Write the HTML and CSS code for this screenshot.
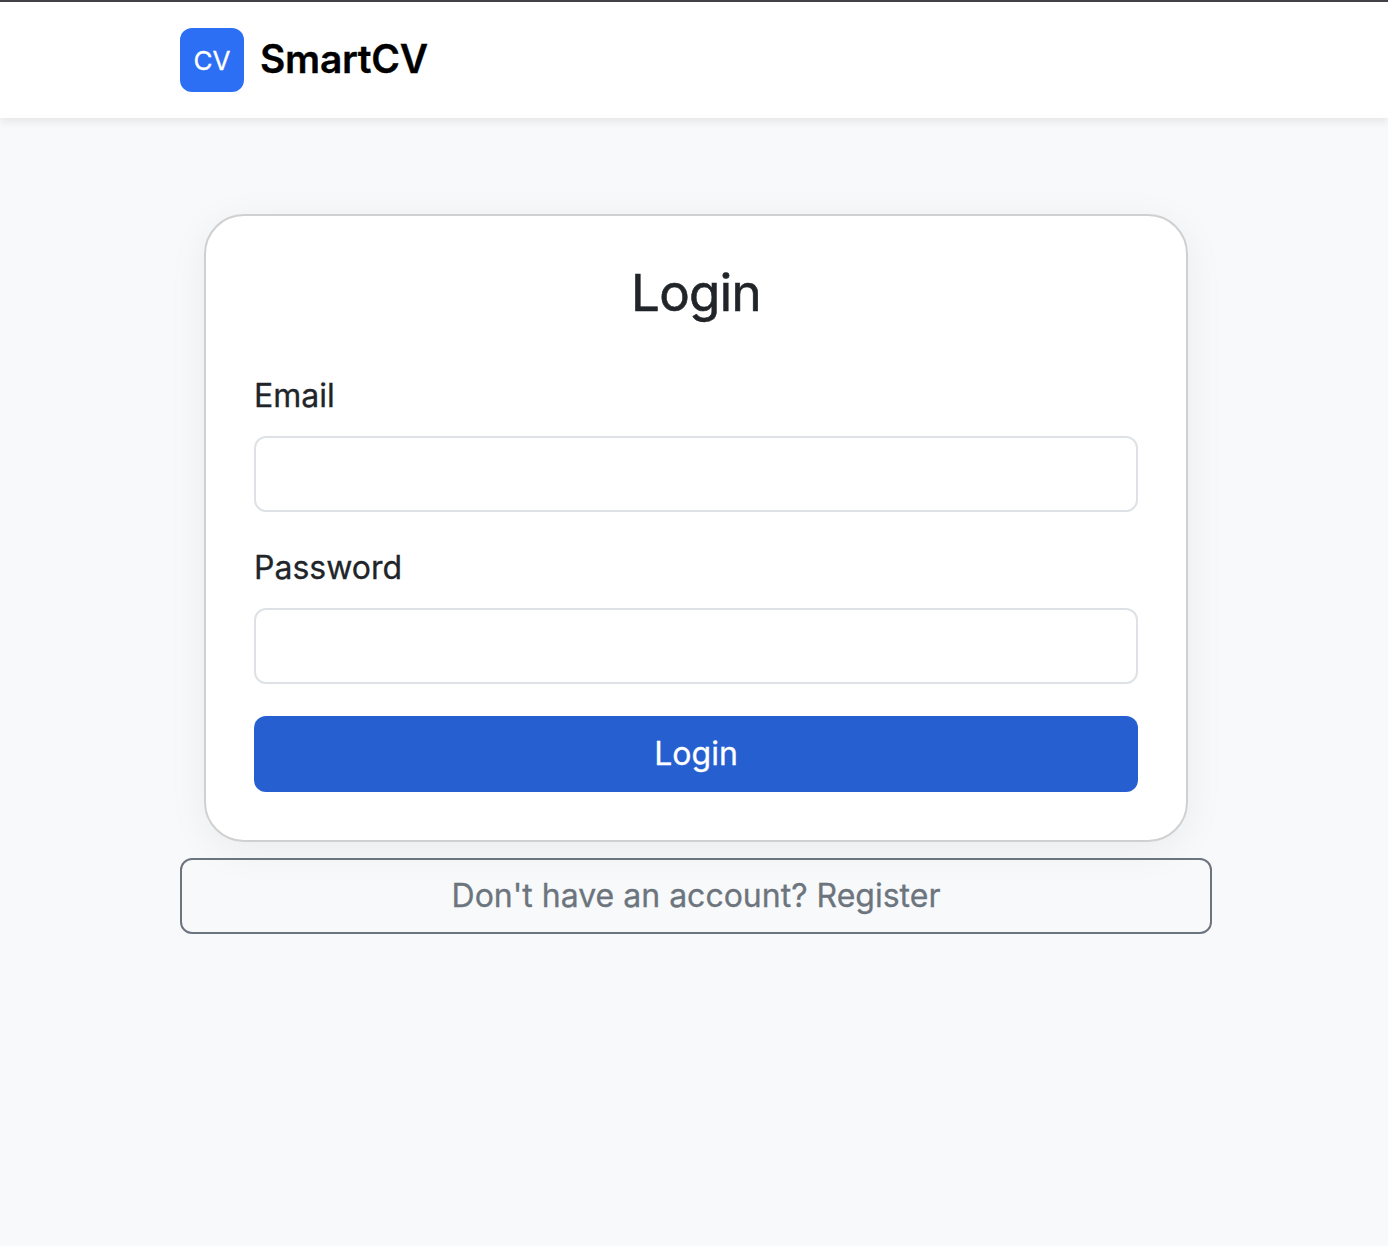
FILE: index.html
```html
<!DOCTYPE html>
<html lang="en">
<head>
<meta charset="utf-8">
<title>SmartCV</title>
<link rel="stylesheet" href="styles.css">
</head>
<body>
<header class="navbar">
  <a class="brand"><span class="brand-mark">CV</span><span class="brand-name">SmartCV</span></a>
</header>
<main class="container">
  <form class="card">
    <h1 class="title">Login</h1>
    <label class="label" for="email">Email</label>
    <input class="input" id="email" type="email">
    <label class="label" for="password">Password</label>
    <input class="input" id="password" type="password">
    <button class="submit" type="button">Login</button>
  </form>
  <a class="register">Don't have an account? Register</a>
</main>
</body>
</html>
```
FILE: styles.css
```css
* { box-sizing: border-box; }
body {
  margin: 0;
  min-height: 1246px;
  background: #f8f9fb;
  color: #212529;
  font-family: Inter, sans-serif;
  font-size: 32px;
  line-height: 48px;
  -webkit-text-stroke: 0.3px currentColor;
}
.navbar {
  height: 118px;
  padding: 26px 180px 0;
  border-top: 2px solid #434048;
  background: #fff;
  box-shadow: 0 4px 8px rgba(0, 0, 0, 0.075);
}
.brand { display: flex; align-items: center; gap: 16px; }
.brand-mark {
  width: 64px;
  height: 64px;
  border-radius: 12px;
  background: #2d6ff4;
  color: #fff;
  font-size: 26px;
  line-height: 65px;
  text-align: center;
}
.brand-name {
  padding-bottom: 2px;
  color: #000;
  font-size: 39px;
  font-weight: 600;
  line-height: 60px;
  letter-spacing: -0.3px;
}
.container { padding: 96px 176px 0 180px; }
.card {
  height: 628px;
  margin: 0 24px 16px;
  padding: 46px 48px;
  border: 2px solid #d0d0d0;
  border-radius: 40px;
  background: #fff;
  box-shadow: 0 8px 40px rgba(0, 0, 0, 0.06);
}
.title {
  margin: 0 0 48px;
  font-size: 51px;
  font-weight: 400;
  line-height: 62px;
  letter-spacing: -0.6px;
  text-align: center;
  -webkit-text-stroke-width: 0.6px;
}
.label { display: block; margin-bottom: 16px; }
.input {
  display: block;
  width: 100%;
  height: 76px;
  margin-bottom: 32px;
  padding: 12px 24px;
  border: 2px solid #dee2e6;
  border-radius: 12px;
  background: #fff;
  font: inherit;
}
.submit {
  display: block;
  width: 100%;
  height: 76px;
  padding: 0;
  border: 0;
  border-radius: 12px;
  background: #265fd0;
  color: #fff;
  font: inherit;
}
.register {
  display: block;
  height: 76px;
  padding-top: 12px;
  border: 2px solid #6c757d;
  border-radius: 12px;
  color: #6c757d;
  text-align: center;
}
```
